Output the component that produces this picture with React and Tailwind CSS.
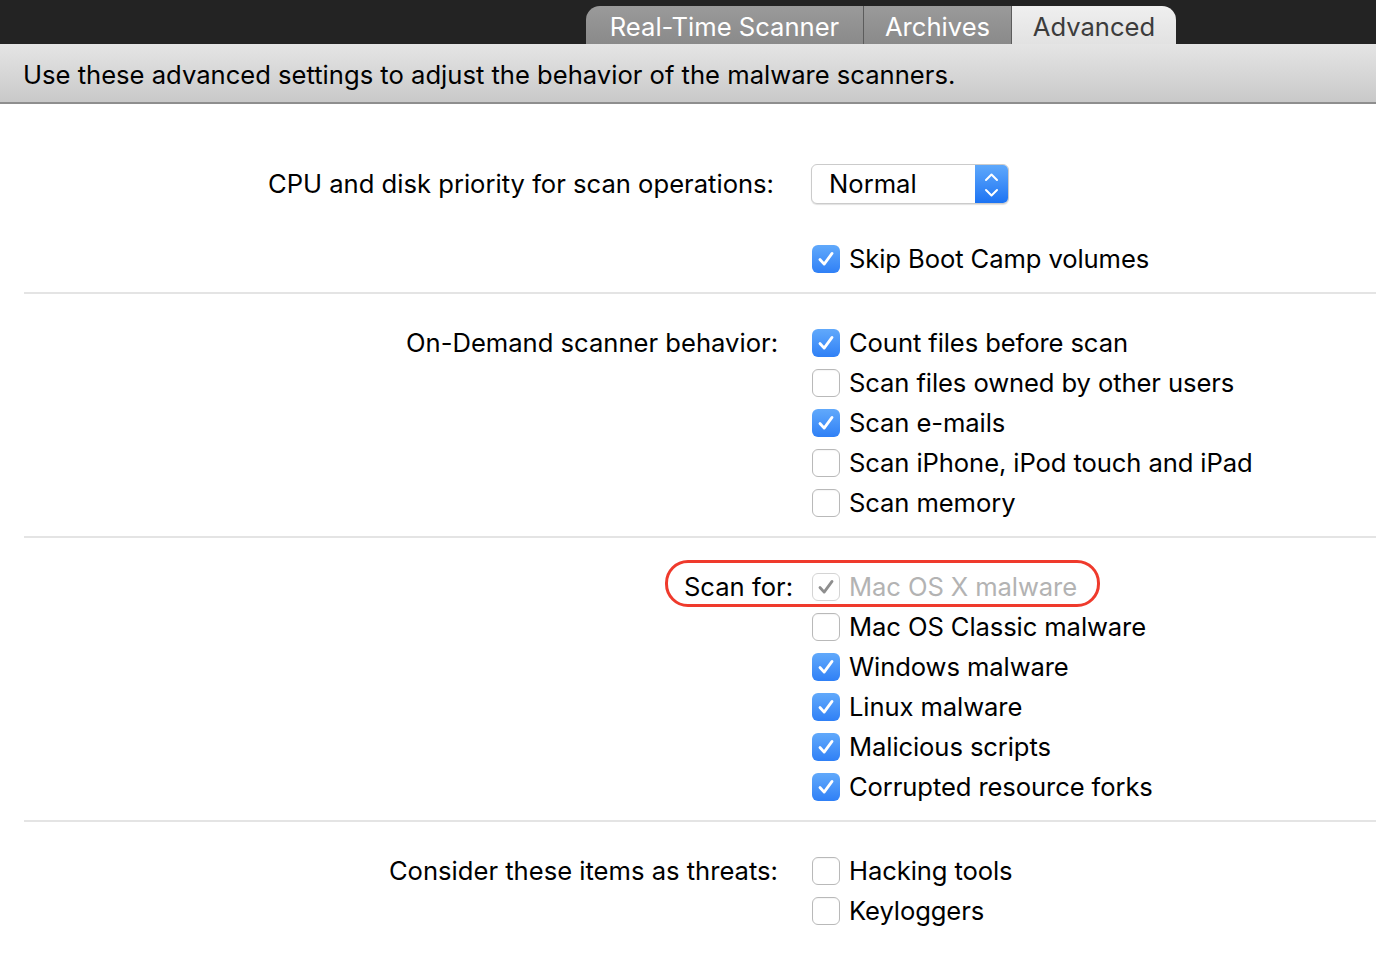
import React from 'react';

const font = { fontFamily: 'Inter, "Liberation Sans", sans-serif' };

function CheckMark({ className }) {
  return (
    <svg viewBox="0 0 28 28" className={className} fill="none">
      <path d="M7.5 14.5l4.5 5 8.5-11.5" stroke="currentColor" strokeWidth="3" strokeLinecap="round" strokeLinejoin="round" />
    </svg>
  );
}

function Checkbox({ checked, disabled }) {
  if (disabled) {
    return (
      <div className="w-[28px] h-[28px] rounded-[6px] border border-[#d4d4d4] bg-white flex items-center justify-center text-[#8e8e8e] shrink-0">
        <CheckMark className="w-[26px] h-[26px]" />
      </div>
    );
  }
  if (checked) {
    return (
      <div className="w-[28px] h-[28px] rounded-[6px] bg-gradient-to-b from-[#61a9fb] to-[#2f80f6] flex items-center justify-center text-white shrink-0">
        <CheckMark className="w-[26px] h-[26px]" />
      </div>
    );
  }
  return <div className="w-[28px] h-[28px] rounded-[6px] border border-[#b9b9b9] bg-white shadow-[inset_0_1px_1px_rgba(0,0,0,0.04)] shrink-0" />;
}

function Option({ label, checked, disabled }) {
  return (
    <div className="h-[40px] flex items-center gap-[9px]">
      <Checkbox checked={checked} disabled={disabled} />
      <span className={`tracking-[-0.1px] ${disabled ? 'text-[#b3b3b3]' : 'text-black'}`}>{label}</span>
    </div>
  );
}

function Section({ label, shift = '', children, last }) {
  return (
    <div className={`flex ${last ? '' : 'border-b-2 border-[#e4e4e4]'} ml-[24px]`}>
      <div className="w-[754px] shrink-0 h-[40px] flex items-center justify-end">
        <span className={shift}>{label}</span>
      </div>
      <div className="ml-[34px] flex flex-col">{children}</div>
    </div>
  );
}

function Stepper() {
  return (
    <svg viewBox="0 0 33 40" className="w-[33px] h-[40px]" fill="none">
      <path d="M11 15l5.5-5.5L22 15" stroke="white" strokeWidth="2" strokeLinecap="round" strokeLinejoin="round" />
      <path d="M11 25l5.5 5.5L22 25" stroke="white" strokeWidth="2" strokeLinecap="round" strokeLinejoin="round" />
    </svg>
  );
}

export default function App() {
  const tabs = [
    { name: 'Real-Time Scanner', w: 'w-[277px]', round: 'rounded-tl-[14px]' },
    { name: 'Archives', w: 'w-[148px]', round: '' },
    { name: 'Advanced', w: 'w-[165px]', round: 'rounded-tr-[14px]', active: true },
  ];

  return (
    <div className="w-[1376px] h-[970px] bg-white overflow-hidden text-[25.6px]" style={font}>
      {/* tab strip */}
      <div className="h-[44px] bg-[#232323] flex items-end pl-[586px]">
        {tabs.map((t, i) => (
          <div
            key={t.name}
            className={`${t.w} h-[38px] ${t.round} flex items-center justify-center pt-[4px] ${i > 0 ? 'border-l border-[#5c5c5c]' : ''} ${
              t.active
                ? 'bg-gradient-to-b from-[#efefef] to-[#e2e2e2] text-[#3c3c3c]'
                : 'bg-gradient-to-b from-[#9a9a9a] to-[#8a8a8a] text-white'
            }`}
          >
            {t.name}
          </div>
        ))}
      </div>

      {/* description bar */}
      <div className="h-[60px] bg-gradient-to-b from-[#e5e5e5] to-[#c9c9c9] border-b-[2px] border-[#8e8e8e] flex items-center pl-[23px] pt-[4px] text-black">
        Use these advanced settings to adjust the behavior of the malware scanners.
      </div>

      <div className="pt-[60px]">
        <div className="flex ml-[24px] border-b-2 border-[#e4e4e4] pb-[13px]">
          <div className="w-[754px] shrink-0 flex flex-col items-end pr-[4px]">
            <div className="h-[40px] flex items-center pt-[1px]">CPU and disk priority for scan operations:</div>
          </div>
          <div className="ml-[33px] flex flex-col">
            <div className="w-[198px] h-[40px] rounded-[6px] border border-[#cbcbcb] shadow-[0_1px_1px_rgba(0,0,0,0.12)] bg-white flex overflow-hidden">
              <div className="flex-1 flex items-center pl-[17px] pt-[1px]">Normal</div>
              <div className="w-[33px] bg-gradient-to-b from-[#5ea8fb] to-[#1b73f3]">
                <Stepper />
              </div>
            </div>
            <div className="mt-[35px] ml-[1px]">
              <Option label="Skip Boot Camp volumes" checked />
            </div>
          </div>
        </div>

        <div className="pt-[29px]">
          <Section label="On-Demand scanner behavior:">
            <Option label="Count files before scan" checked />
            <Option label="Scan files owned by other users" />
            <Option label="Scan e-mails" checked />
            <Option label="Scan iPhone, iPod touch and iPad" />
            <div className="pb-[13px]">
              <Option label="Scan memory" />
            </div>
          </Section>
        </div>

        <div className="pt-[29px] relative">
          <Section label="Scan for:" shift="-mr-[15px]">
            <Option label="Mac OS X malware" disabled />
            <Option label="Mac OS Classic malware" />
            <Option label="Windows malware" checked />
            <Option label="Linux malware" checked />
            <Option label="Malicious scripts" checked />
            <div className="pb-[13px]">
              <Option label="Corrupted resource forks" checked />
            </div>
          </Section>
          {/* highlight ring */}
          <div className="absolute left-[665px] top-[22px] w-[435px] h-[47px] rounded-[23px] border-[3px] border-[#ef3a2c] pointer-events-none" />
        </div>

        <div className="pt-[29px]">
          <Section label="Consider these items as threats:" last>
            <Option label="Hacking tools" />
            <Option label="Keyloggers" />
          </Section>
        </div>
      </div>
    </div>
  );
}
